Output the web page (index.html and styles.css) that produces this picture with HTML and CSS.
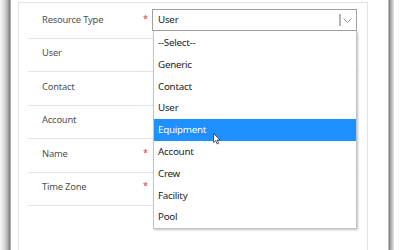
FILE: index.html
```html
<!DOCTYPE html>
<html lang="en">
<head>
  <meta charset="UTF-8" />
  <title>Resource</title>
  <link rel="stylesheet" href="styles.css">
</head>
<body>
  <div class="frame">
    <div class="shadow-left"></div>
    <div class="card">
      <div class="row">
        <span class="label">Resource Type</span>
        <span class="req">*</span>
        <div class="select-wrap">
          <div class="select">
            <span>User</span>
            <span class="arrow">
              <svg width="14" height="14" viewBox="0 0 14 14"><path d="M1 1v12" stroke="#6a6a6a" stroke-width="1" fill="none"/><path d="M4.5 5.5l4 4 4-4" stroke="#888" stroke-width="0.9" fill="none"/></svg>
            </span>
          </div>
          <ul class="options">
            <li>--Select--</li>
            <li>Generic</li>
            <li>Contact</li>
            <li>User</li>
            <li class="active">Equipment
              <svg class="cursor" width="8" height="12" viewBox="0 0 8 12"><path d="M0.5 0.5v9l2.2-2 1.5 3.5 1.4-.6-1.5-3.4h3z" fill="#fff" stroke="#333" stroke-width="0.8"/></svg>
            </li>
            <li>Account</li>
            <li>Crew</li>
            <li>Facility</li>
            <li>Pool</li>
          </ul>
        </div>
      </div>
      <div class="row"><span class="label">User</span><span class="req"></span></div>
      <div class="row"><span class="label">Contact</span><span class="req"></span></div>
      <div class="row"><span class="label">Account</span><span class="req"></span></div>
      <div class="row"><span class="label">Name</span><span class="req">*</span></div>
      <div class="row"><span class="label">Time Zone</span><span class="req">*</span></div>
    </div>
    <div class="gap-right"></div>
    <div class="shadow-right"></div>
  </div>
</body>
</html>
```

FILE: styles.css
```css
body {
  margin: 0;
  width: 400px;
  height: 250px;
  overflow: hidden;
  background: #fff;
  font-family: "Segoe UI", "Noto Sans", sans-serif;
  font-size: 10px;
}

.frame {
  display: flex;
  height: 250px;
}

.shadow-left {
  width: 11px;
  flex-shrink: 0;
  background: linear-gradient(to right, #f6f6f6, #e2e2e2 30%, #b8b8b8 65%, #7c7c7c 90%, #d8d8d8);
}

.card {
  flex-shrink: 0;
  margin-left: 7px;
  margin-top: 2px;
  width: 348px;
  border: 1px solid #e3e3e3;
  border-bottom: none;
  padding-top: 2.6px;
}

.row {
  position: relative;
  display: flex;
  align-items: flex-start;
  box-sizing: border-box;
  height: 33.4px;
  padding: 3.4px 0 0 14px;
  margin: 0 9px;
  border-bottom: 1px solid #e3e3e3;
}

.label {
  width: 101px;
  line-height: 21px;
  color: #505050;
  font-size: 9.4px;
  letter-spacing: -0.2px;
}

.req {
  width: 9px;
  line-height: 19px;
  color: #e0303a;
  font-size: 9px;
}

.select-wrap {
  position: relative;
  width: 205px;
}

.select {
  display: flex;
  align-items: center;
  justify-content: space-between;
  height: 20px;
  padding-left: 5px;
  border: 1px solid #a0a0a0;
  color: #222;
  font-size: 9.8px;
  letter-spacing: -0.25px;
}

.arrow {
  display: flex;
  margin-right: 3px;
}

.options {
  position: absolute;
  top: 22px;
  left: 1px;
  width: 202px;
  margin: 0;
  padding: 1px 0 0;
  list-style: none;
  background: #fff;
  border: 1px solid #c4c4c4;
  border-top: none;
  box-shadow: 1px 1px 2px rgba(0, 0, 0, 0.25);
  z-index: 2;
}

.options li {
  position: relative;
  height: 21.8px;
  line-height: 21.8px;
  padding-left: 4px;
  color: #222;
  font-size: 9.8px;
  letter-spacing: -0.25px;
}

.options li.active {
  background: #1e90ff;
  color: #fff;
}

.cursor {
  position: absolute;
  left: 59px;
  top: 14px;
}

.gap-right {
  width: 20px;
  flex-shrink: 0;
}

.shadow-right {
  width: 6px;
  flex-shrink: 0;
  background: linear-gradient(to right, #d0d0d0, #8a8a8a 25%, #b4b4b4 55%, #e4e4e4);
}
```
